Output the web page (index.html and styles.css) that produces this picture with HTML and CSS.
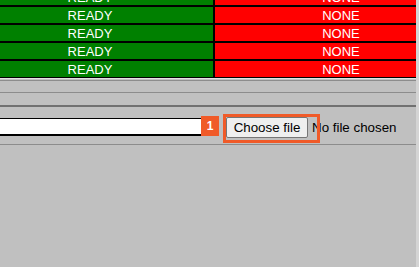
FILE: index.html
```html
<!DOCTYPE html>
<html>
<head>
<meta charset="utf-8">
<link rel="stylesheet" href="styles.css">
</head>
<body>
<div class="page">
  <table class="status">
    <tr><td class="ok">READY</td><td class="bad">NONE</td></tr>
    <tr><td class="ok">READY</td><td class="bad">NONE</td></tr>
    <tr><td class="ok">READY</td><td class="bad">NONE</td></tr>
    <tr><td class="ok">READY</td><td class="bad">NONE</td></tr>
    <tr><td class="ok">READY</td><td class="bad">NONE</td></tr>
  </table>
  <div class="rule rule-light"></div>
  <div class="rule rule-mid"></div>
  <div class="rule rule-second"></div>
  <div class="rule rule-thick"></div>
  <div class="upload-row">
    <input type="text" class="path">
    <div class="file-wrap">
      <label class="file-btn">Choose file<input type="file" class="file-native"></label>
      <span class="file-name">No file chosen</span>
      <span class="highlight"></span>
      <span class="badge">1</span>
    </div>
  </div>
  <div class="rule rule-bottom"></div>
</div>
</body>
</html>
```
FILE: styles.css
```css
html {
  background: #d4d4d4;
}
body {
  margin: 0;
  font-family: "Liberation Sans", Arial, sans-serif;
}
.page {
  width: 416px;
  height: 267px;
  overflow: hidden;
  background: #c0c0c0;
}
.status {
  border-collapse: separate;
  border-spacing: 0;
  table-layout: fixed;
  width: 502px;
  margin-left: -34px;
  margin-top: -12px;
}
.status td {
  box-sizing: border-box;
  height: 18px;
  padding: 1px 0 0 0;
  border: 1px solid #000;
  color: #fff;
  font-size: 13px;
  line-height: 15px;
  text-align: center;
  vertical-align: middle;
}
.status td.ok {
  width: 248px;
  background: #008000;
}
.status td.bad {
  width: 254px;
  background: #ff0000;
}
.rule {
  height: 0;
}
.rule-light {
  border-top: 1px solid #e2e2e2;
}
.rule-mid {
  margin-top: 1px;
  border-top: 1px solid #8c8c8c;
}
.rule-second {
  margin-top: 11px;
  border-top: 1px solid #8c8c8c;
}
.rule-thick {
  margin-top: 12px;
  border-top: 2px solid #717171;
}
.upload-row {
  display: flex;
  align-items: flex-start;
  height: 37px;
  padding-top: 10px;
  box-sizing: border-box;
}
.path {
  box-sizing: border-box;
  width: 223px;
  height: 18px;
  margin: 1px 0 0 -20px;
  padding: 0;
  border: 1px solid #000;
  border-bottom-width: 2px;
  background: #fff;
  outline: none;
}
.file-wrap {
  position: relative;
  margin-left: 23px;
  display: flex;
  align-items: center;
  font-size: 13.333px;
  color: #000;
}
.file-btn {
  box-sizing: border-box;
  display: flex;
  align-items: center;
  justify-content: center;
  height: 21px;
  width: 82px;
  margin-right: 4px;
  background: #efefef;
  border: 1px solid #767676;
  border-radius: 2px;
  color: #000;
}
.file-native {
  display: none;
}
.file-name {
  white-space: nowrap;
}
.highlight {
  position: absolute;
  left: -3px;
  top: -3px;
  width: 97px;
  height: 29px;
  box-sizing: border-box;
  border: 3px solid #f05a28;
  pointer-events: none;
}
.badge {
  position: absolute;
  left: -25px;
  top: -1px;
  width: 18px;
  height: 20px;
  background: #f05a28;
  color: #fff;
  font-size: 12px;
  font-weight: bold;
  line-height: 20px;
  text-align: center;
}
.rule-bottom {
  border-top: 1px solid #8c8c8c;
}
```
